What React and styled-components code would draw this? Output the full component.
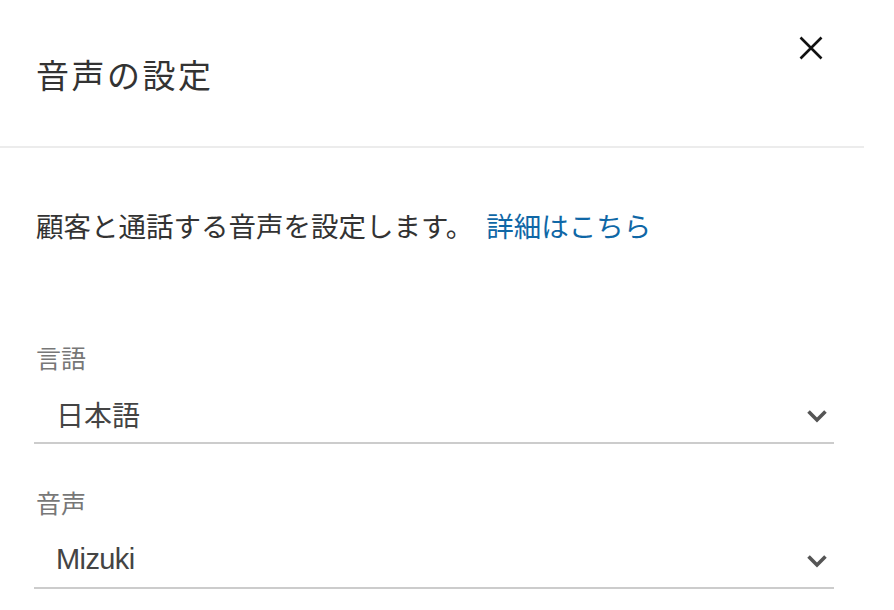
import React, { useState } from 'react';
import styled, { createGlobalStyle } from 'styled-components';

const GlobalStyle = createGlobalStyle`
  body {
    margin: 0;
    background: #fff;
    font-family: "Noto Sans CJK JP", "Noto Sans", sans-serif;
  }
`;

const Panel = styled.div`
  width: 864px;
  background: #fff;
`;

const Header = styled.header`
  display: flex;
  justify-content: space-between;
  align-items: flex-start;
  height: 148px;
  padding: 0 40px 0 36px;
  box-sizing: border-box;
  border-bottom: 2px solid #ececec;
`;

const Title = styled.h1`
  margin: 58px 0 0;
  font-size: 33px;
  line-height: 1;
  font-weight: 400;
  letter-spacing: 2.5px;
  color: #333;
`;

const CloseButton = styled.button`
  margin-top: 35px;
  padding: 0;
  width: 26px;
  height: 26px;
  border: none;
  background: none;
  cursor: pointer;
  display: flex;
  align-items: center;
  justify-content: center;
`;

const Body = styled.div`
  padding: 64px 30px 0 34px;
`;

const Description = styled.p`
  margin: 0 0 0 2px;
  font-size: 27.5px;
  line-height: 1;
  color: #333;
`;

const Link = styled.a`
  margin-left: 13px;
  color: #0f67a6;
  text-decoration: none;
  cursor: pointer;
`;

const Field = styled.div`
  margin-top: ${p => p.$gap}px;
`;

const Label = styled.label`
  display: block;
  margin-left: 2px;
  font-size: 25px;
  line-height: 1;
  color: #777;
`;

const SelectRow = styled.div`
  display: flex;
  align-items: center;
  justify-content: space-between;
  width: 800px;
  margin-top: 30px;
  padding: 0 7px 14px 22px;
  box-sizing: border-box;
  border-bottom: 2px solid #cccccc;
  cursor: pointer;
`;

const Value = styled.span`
  font-size: ${p => (p.$latin ? 29 : 28)}px;
  line-height: 28px;
  color: #444;
  font-family: ${p =>
    p.$latin
      ? '"Liberation Sans", "Noto Sans CJK JP", sans-serif'
      : '"Noto Sans CJK JP", sans-serif'};
  letter-spacing: ${p => (p.$latin ? '-0.6px' : '0')};
`;

const ChevronBox = styled.span`
  display: flex;
  margin-top: 6px;
`;

const CloseIcon = () => (
  <svg width="24" height="24" viewBox="0 0 24 24">
    <path d="M1.5 1.5 L22.5 22.5 M22.5 1.5 L1.5 22.5" stroke="#111" strokeWidth="2.6" fill="none" />
  </svg>
);

const Chevron = () => (
  <ChevronBox>
    <svg width="20" height="13" viewBox="0 0 20 13">
      <path d="M2.8 2.8 L10 10 L17.2 2.8" stroke="#555" strokeWidth="3.6" fill="none" strokeLinecap="square" />
    </svg>
  </ChevronBox>
);

const fields = [
  { label: '言語', value: '日本語', gap: 105 },
  { label: '音声', value: 'Mizuki', gap: 46, latin: true },
];

const App = () => {
  const [open, setOpen] = useState(true);

  return (
    <>
      <GlobalStyle />
      {open && (
        <Panel>
          <Header>
            <Title>音声の設定</Title>
            <CloseButton aria-label="閉じる" onClick={() => setOpen(false)}>
              <CloseIcon />
            </CloseButton>
          </Header>
          <Body>
            <Description>
              顧客と通話する音声を設定します。<Link>詳細はこちら</Link>
            </Description>
            {fields.map(f => (
              <Field key={f.label} $gap={f.gap}>
                <Label>{f.label}</Label>
                <SelectRow>
                  <Value $latin={f.latin}>{f.value}</Value>
                  <Chevron />
                </SelectRow>
              </Field>
            ))}
          </Body>
        </Panel>
      )}
    </>
  );
};

export default App;
